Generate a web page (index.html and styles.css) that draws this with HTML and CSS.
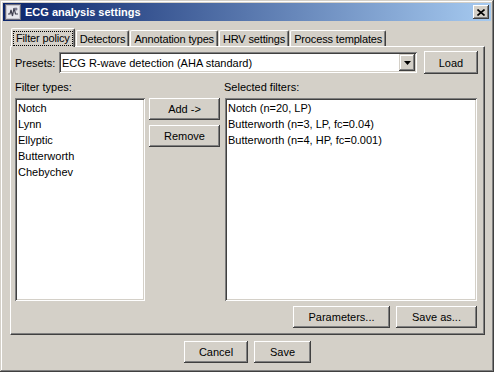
FILE: index.html
```html
<!DOCTYPE html>
<html>
  <head>
    <title>ECG analysis settings</title>
    <link rel="stylesheet" href="styles.css">
  </head>
  <body>
    <div class="window">
      <div class="titlebar">
        <svg class="app-icon" width="16" height="16" viewBox="0 0 16 16">
          <rect x="0.5" y="0.5" width="15" height="15" fill="#c8c8d0" stroke="#6a6a78"/>
          <rect x="2" y="2" width="12" height="12" fill="#e8e8ee"/>
          <path d="M3 10 L5 10 L6 6 L7.5 12 L9 4 L10.5 10 L13 10" fill="none" stroke="#404050" stroke-width="1.2"/>
          <circle cx="11" cy="5" r="1.5" fill="#7a7a90"/>
        </svg>
        <span class="title">ECG analysis settings</span>
        <span class="close-btn">
          <svg width="8" height="7" viewBox="0 0 8 7">
            <path d="M0.5 0.5 L7.5 6.5 M7.5 0.5 L0.5 6.5" stroke="#000" stroke-width="1.6"/>
          </svg>
        </span>
      </div>
      <div class="dialog">
        <div class="tabs">
          <div class="tab active"><span class="focus">Filter policy</span></div>
          <div class="tab">Detectors</div>
          <div class="tab">Annotation types</div>
          <div class="tab">HRV settings</div>
          <div class="tab">Process templates</div>
        </div>
        <div class="panel">
          <div class="presets-row">
            <span class="presets-label">Presets:</span>
            <div class="combo">
              <span class="combo-text">ECG R-wave detection (AHA standard)</span>
              <span class="combo-btn">
                <svg width="7" height="4" viewBox="0 0 7 4"><path d="M0 0 H7 L3.5 4 Z" fill="#000"/></svg>
              </span>
            </div>
            <button class="btn load-btn">Load</button>
          </div>
          <div class="filters">
            <div class="col-label">Filter types:</div>
            <div></div>
            <div class="col-label">Selected filters:</div>
            <div class="listbox">
              <div class="item">Notch</div>
              <div class="item">Lynn</div>
              <div class="item">Ellyptic</div>
              <div class="item">Butterworth</div>
              <div class="item">Chebychev</div>
            </div>
            <div class="move-buttons">
              <button class="btn">Add -&gt;</button>
              <button class="btn">Remove</button>
            </div>
            <div class="listbox">
              <div class="item">Notch (n=20, LP)</div>
              <div class="item">Butterworth (n=3, LP, fc=0.04)</div>
              <div class="item">Butterworth (n=4, HP, fc=0.001)</div>
            </div>
          </div>
          <div class="panel-actions">
            <button class="btn params-btn">Parameters...</button>
            <button class="btn saveas-btn">Save as...</button>
          </div>
        </div>
        <div class="footer">
          <button class="btn cancel-btn">Cancel</button>
          <button class="btn save-btn">Save</button>
        </div>
      </div>
    </div>
  </body>
</html>
```

FILE: styles.css
```css
body {
  margin: 0;
  background-color: #d4d0c8;
  font-family: "Liberation Sans", Arial, sans-serif;
  font-size: 11px;
  color: #000;
}
.window {
  width: 494px;
  height: 372px;
  box-sizing: border-box;
  padding: 3px;
  background-color: #d4d0c8;
  box-shadow: inset -1px -1px #404040, inset 1px 1px #d4d0c8,
              inset -2px -2px #808080, inset 2px 2px #fff;
}
.titlebar {
  height: 18px;
  display: flex;
  align-items: center;
  padding: 0 2px;
  background: linear-gradient(to right, #0a246a, #a6caf0);
}
.app-icon {
  margin-right: 4px;
}
.title {
  color: #fff;
  font-weight: bold;
  font-size: 11px;
}
.close-btn {
  margin-left: auto;
  width: 16px;
  height: 14px;
  display: flex;
  align-items: center;
  justify-content: center;
  background-color: #d4d0c8;
  box-shadow: inset -1px -1px #404040, inset 1px 1px #fff,
              inset -2px -2px #808080;
}
.dialog {
  padding: 7px 6px 0 7px;
}
.tabs {
  display: flex;
  align-items: flex-end;
  height: 18px;
  padding-left: 1px;
  position: relative;
  z-index: 1;
}
.tab {
  height: 16px;
  line-height: 16px;
  padding: 0 3px;
  margin-right: 1px;
  border-top: 1px solid #fff;
  border-left: 1px solid #fff;
  border-right: 1px solid #404040;
  border-radius: 2px 2px 0 0;
  box-sizing: border-box;
  box-shadow: inset -1px 0 #808080;
  background-color: #d4d0c8;
  white-space: nowrap;
  letter-spacing: -0.15px;
}
.tab.active {
  height: 19px;
  margin-bottom: -1px;
  padding: 2px 1px 0 1px;
  line-height: 14px;
}
.focus {
  display: inline-block;
  border: 1px dotted #000;
  padding: 0 2px;
  line-height: 13px;
}
.panel {
  height: 289px;
  box-sizing: border-box;
  padding: 4px 6px 5px 4px;
  border-top: 1px solid #fff;
  border-left: 1px solid #fff;
  border-right: 1px solid #404040;
  border-bottom: 1px solid #404040;
  box-shadow: inset -1px -1px #808080;
  display: flex;
  flex-direction: column;
}
.presets-row {
  display: flex;
  align-items: center;
  height: 23px;
}
.presets-label {
  width: 44px;
}
.combo {
  flex: 1;
  height: 21px;
  box-sizing: border-box;
  display: flex;
  align-items: center;
  background-color: #fff;
  box-shadow: inset 1px 1px #808080, inset -1px -1px #fff,
              inset 2px 2px #404040, inset -2px -2px #d4d0c8;
  padding: 2px;
}
.combo-text {
  flex: 1;
  padding-left: 1px;
}
.combo-btn {
  width: 16px;
  height: 17px;
  display: flex;
  align-items: center;
  justify-content: center;
  background-color: #d4d0c8;
  box-shadow: inset -1px -1px #404040, inset 1px 1px #d4d0c8,
              inset -2px -2px #808080, inset 2px 2px #fff;
}
.btn {
  font-family: "Liberation Sans", Arial, sans-serif;
  font-size: 11px;
  color: #000;
  height: 22px;
  padding: 0;
  border: none;
  background-color: #d4d0c8;
  box-shadow: inset -1px -1px #404040, inset 1px 1px #fff,
              inset -2px -2px #808080, inset 2px 2px #d4d0c8;
}
.load-btn {
  width: 54px;
  height: 23px;
  margin-left: 7px;
}
.filters {
  margin-top: 6px;
  display: grid;
  grid-template-columns: 130px 71px 252px;
  grid-template-rows: 14px 203px;
  column-gap: 4px;
  row-gap: 4px;
}
.filters .listbox:last-child {
  margin-left: 1px;
  width: 252px;
}
.col-label {
  line-height: 14px;
}
.listbox {
  background-color: #fff;
  box-sizing: border-box;
  padding: 2px 2px 2px 3px;
  box-shadow: inset 1px 1px #808080, inset -1px -1px #fff,
              inset 2px 2px #404040, inset -2px -2px #d4d0c8;
}
.item {
  line-height: 16px;
  white-space: nowrap;
}
.move-buttons {
  display: flex;
  flex-direction: column;
  gap: 5px;
}
.move-buttons .btn {
  width: 71px;
}
.panel-actions {
  margin-top: 5px;
  display: flex;
  justify-content: flex-end;
  gap: 6px;
  padding-right: 1px;
}
.params-btn {
  width: 97px;
}
.saveas-btn {
  width: 81px;
}
.footer {
  margin-top: 6px;
  display: flex;
  justify-content: center;
  gap: 6px;
}
.cancel-btn {
  width: 64px;
}
.save-btn {
  width: 57px;
}
```
